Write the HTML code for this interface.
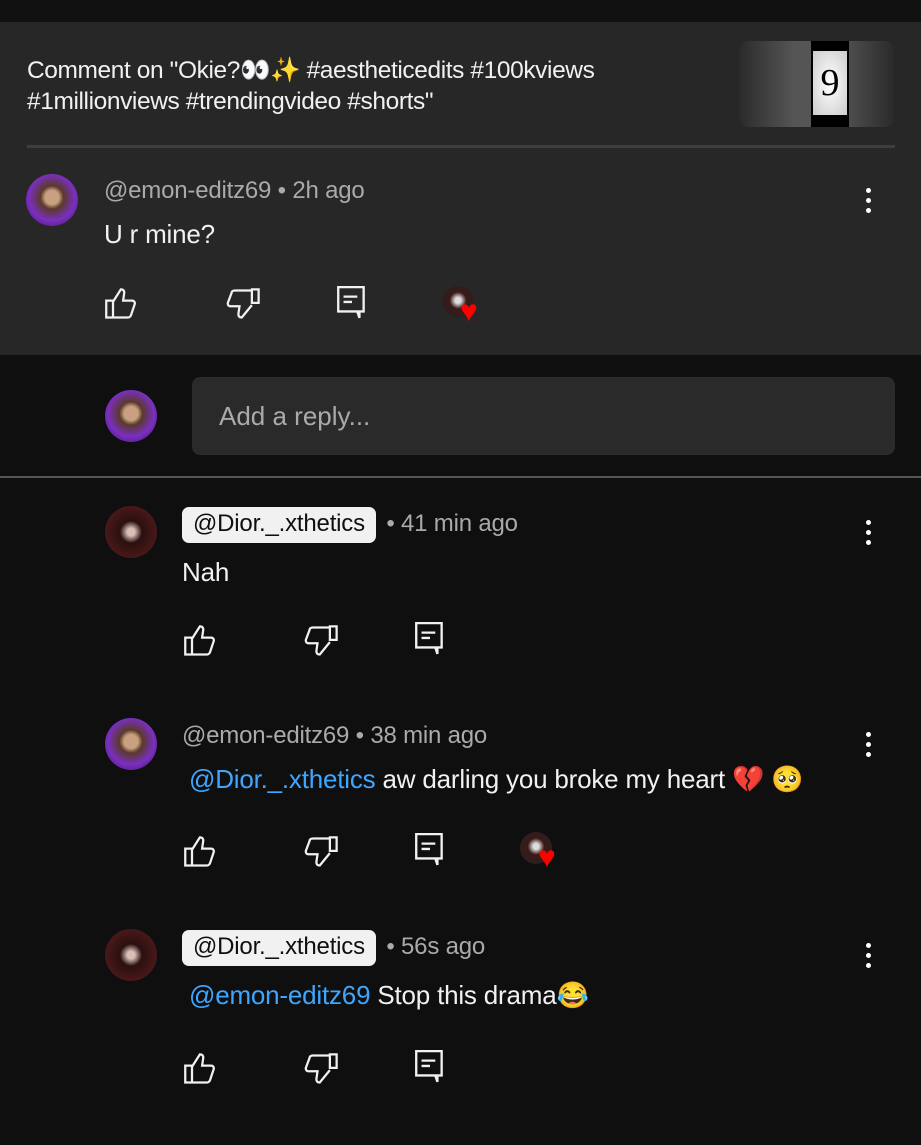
<!DOCTYPE html>
<html><head><meta charset="utf-8"><style>
*{margin:0;padding:0;box-sizing:border-box}
body{width:921px;height:1145px;background:#0f0f0f;font-family:"Liberation Sans","Noto Sans CJK JP",sans-serif;color:#f1f1f1;position:relative;overflow:hidden}
.abs{position:absolute}
.top{left:0;top:0;width:921px;height:22px;background:#111}
.panel{left:0;top:22px;width:921px;height:333px;background:#272727}
.title{left:27px;top:55px;font-size:24.5px;line-height:31px;color:#f1f1f1;letter-spacing:-0.4px}
.thumb{left:739px;top:41px;width:155px;height:86px;border-radius:10px;background:linear-gradient(90deg,#2a2a2a,#555 35%,#555 65%,#2a2a2a)}
.thumb .in{position:absolute;left:72px;top:0;width:38px;height:86px;background:#000}
.thumb .card{position:absolute;left:74px;top:10px;width:34px;height:64px;background:radial-gradient(#fff,#ccc);color:#000;font-family:"Liberation Serif",serif;font-size:38px;text-align:center;line-height:64px}
.sep{left:27px;top:145px;width:868px;height:3px;background:#3e3e3e}
.av{border-radius:50%;width:52px;height:52px}
.emon{background:radial-gradient(circle at 50% 45%,#c9a080 0 18%,#5a3a2a 30%,#7a2fc0 60%,#3a1060 100%)}
.dior{background:radial-gradient(circle at 50% 50%,#d8c0b8 0 10%,#2a1010 30%,#4a1818 70%,#1a0808 100%)}
.meta{font-size:24px;color:#aaa;letter-spacing:-0.2px}
.txt{font-size:26px;color:#f1f1f1;letter-spacing:-0.2px}
.chip{display:inline-block;background:#f1f1f1;color:#0f0f0f;border-radius:7px;padding:3px 11px 5px;font-size:24px;margin-right:4px}
.link{color:#3ea6ff}
.dots{width:6px}
.dots i{display:block;width:5px;height:5px;border-radius:50%;background:#fff;margin-bottom:5px}
.reply{left:192px;top:377px;width:703px;height:78px;background:#2a2a2a;border-radius:8px;font-size:26px;color:#aaa;padding:24px 27px}
.div{left:0;top:476px;width:921px;height:2px;background:#555}
svg{position:absolute}
.mini{width:32px;height:32px;border-radius:50%;background:radial-gradient(circle at 50% 45%,#ddd 0 12%,#3a1a18 35%,#222 100%)}
.heart{color:#f00;font-size:30px}
</style></head><body>
<div class="abs top"></div>
<div class="abs panel"></div>
<div class="abs title">Comment on "Okie?👀✨ #aestheticedits #100kviews<br>#1millionviews #trendingvideo #shorts"</div>
<div class="abs thumb"><div class="in"></div><div class="card">9</div></div>
<div class="abs sep"></div>

<svg width="0" height="0"><defs>
<g id="up" fill="none" stroke="#f1f1f1" stroke-width="2"><path d="M2 13h6v15H2z M8 14l7-11c2 0 3 1 3 3l-1 7h8c2 0 3 2 2 4l-3 9c-1 2-2 2-3 2H8"/></g>
<g id="dn" fill="none" stroke="#f1f1f1" stroke-width="2"><path d="M23 3h6v12h-6z M23 4H8C6 4 5 5 5 6l-3 8c-1 2 0 4 2 4h8l-1 7c0 2 1 3 3 3l9-11"/></g>
<g id="cm" fill="none" stroke="#f1f1f1" stroke-width="2.2"><path d="M2 2h24v23h-4v6l-2-6H2z M7 11h13 M7 16h8"/></g>
</defs></svg>

<!-- comment 1 -->
<div class="abs av emon" style="left:26px;top:174px"></div>
<div class="abs meta" style="left:104px;top:177px">@emon-editz69 • 2h ago</div>
<div class="abs txt" style="left:104px;top:219px">U r mine?</div>
<div class="abs dots" style="left:866px;top:188px"><i></i><i></i><i></i></div>
<svg class="abs" style="left:104px;top:286px" width="36" height="36" viewBox="0 0 32 32"><use href="#up"/></svg>
<svg class="abs" style="left:226px;top:286px" width="36" height="36" viewBox="0 0 32 32"><use href="#dn"/></svg>
<svg class="abs" style="left:336px;top:285px" width="32" height="36" viewBox="0 0 30 34"><use href="#cm"/></svg>
<div class="abs mini" style="left:442px;top:286px"></div>
<div class="abs heart" style="left:460px;top:295px">♥</div>

<!-- reply box -->
<div class="abs av emon" style="left:105px;top:390px"></div>
<div class="abs reply">Add a reply...</div>
<div class="abs div"></div>

<!-- reply 1 -->
<div class="abs av dior" style="left:105px;top:506px"></div>
<div class="abs meta" style="left:182px;top:507px"><span class="chip">@Dior._.xthetics</span> • 41 min ago</div>
<div class="abs txt" style="left:182px;top:557px">Nah</div>
<div class="abs dots" style="left:866px;top:520px"><i></i><i></i><i></i></div>
<svg class="abs" style="left:183px;top:623px" width="36" height="36" viewBox="0 0 32 32"><use href="#up"/></svg>
<svg class="abs" style="left:304px;top:623px" width="36" height="36" viewBox="0 0 32 32"><use href="#dn"/></svg>
<svg class="abs" style="left:414px;top:621px" width="32" height="36" viewBox="0 0 30 34"><use href="#cm"/></svg>

<!-- reply 2 -->
<div class="abs av emon" style="left:105px;top:718px"></div>
<div class="abs meta" style="left:182px;top:722px">@emon-editz69 • 38 min ago</div>
<div class="abs txt" style="left:189px;top:764px"><span class="link">@Dior._.xthetics</span> aw darling you broke my heart 💔 🥺</div>
<div class="abs dots" style="left:866px;top:732px"><i></i><i></i><i></i></div>
<svg class="abs" style="left:183px;top:834px" width="36" height="36" viewBox="0 0 32 32"><use href="#up"/></svg>
<svg class="abs" style="left:304px;top:834px" width="36" height="36" viewBox="0 0 32 32"><use href="#dn"/></svg>
<svg class="abs" style="left:414px;top:832px" width="32" height="36" viewBox="0 0 30 34"><use href="#cm"/></svg>
<div class="abs mini" style="left:520px;top:832px"></div>
<div class="abs heart" style="left:538px;top:841px">♥</div>

<!-- reply 3 -->
<div class="abs av dior" style="left:105px;top:929px"></div>
<div class="abs meta" style="left:182px;top:930px"><span class="chip">@Dior._.xthetics</span> • 56s ago</div>
<div class="abs txt" style="left:189px;top:980px"><span class="link">@emon-editz69</span> Stop this drama😂</div>
<div class="abs dots" style="left:866px;top:943px"><i></i><i></i><i></i></div>
<svg class="abs" style="left:183px;top:1051px" width="36" height="36" viewBox="0 0 32 32"><use href="#up"/></svg>
<svg class="abs" style="left:304px;top:1051px" width="36" height="36" viewBox="0 0 32 32"><use href="#dn"/></svg>
<svg class="abs" style="left:414px;top:1049px" width="32" height="36" viewBox="0 0 30 34"><use href="#cm"/></svg>
</body></html>
